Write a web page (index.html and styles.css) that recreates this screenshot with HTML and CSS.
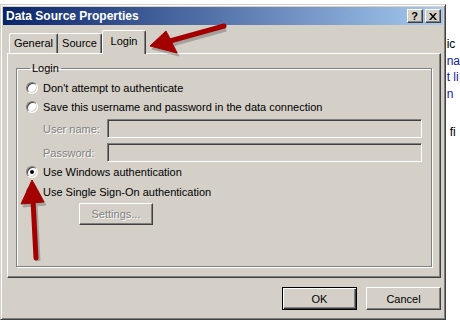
FILE: index.html
```html
<!DOCTYPE html>
<html lang="en">
<head>
    <meta charset="UTF-8">
    <title>Data Source Properties</title>
    <link rel="stylesheet" href="styles.css">
</head>
<body>
    <div class="window">
        <div class="titlebar">
            <span class="title">Data Source Properties</span>
            <div class="caps">
                <button class="cap">?</button>
                <button class="cap">
                    <svg width="8" height="7" viewBox="0 0 8 7"><path d="M0 0h2l2 2.5L6 0h2L5 3.5 8 7H6L4 4.5 2 7H0l3-3.5z" fill="#000"/></svg>
                </button>
            </div>
        </div>

        <div class="dlg">
            <div class="tabs">
                <div class="tab tab-general">General</div>
                <div class="tab tab-source">Source</div>
                <div class="tab tab-login selected">Login</div>
            </div>

            <div class="panel">
                <fieldset class="group">
                    <legend>Login</legend>

                    <div class="row row1"><span class="radio"></span>Don't attempt to authenticate</div>
                    <div class="row row2"><span class="radio"></span>Save this username and password in the data connection</div>

                    <div class="field field1">
                        <label class="disabled">User name:</label>
                        <div class="input"></div>
                    </div>
                    <div class="field field2">
                        <label class="disabled">Password:</label>
                        <div class="input"></div>
                    </div>

                    <div class="row row3"><span class="radio checked"></span>Use Windows authentication</div>
                    <div class="row row4"><span class="radio"></span>Use Single Sign-On authentication</div>

                    <button class="btn settings" disabled>Settings...</button>
                </fieldset>
            </div>

            <div class="actions">
                <button class="btn default">OK</button>
                <button class="btn">Cancel</button>
            </div>
        </div>
    </div>

    <div class="behind">
        <div class="ln dark">ic</div>
        <div class="ln">na</div>
        <div class="ln">t li</div>
        <div class="ln">n</div>
        <div class="ln gap dark">fi</div>
    </div>

    <!-- the red pointer arrows drawn over the screenshot -->
    <svg class="arrows" width="460" height="327" viewBox="0 0 460 327">
        <g fill="#6b6b6b" stroke="#6b6b6b" opacity="0.45" transform="translate(2 3)">
            <line x1="224" y1="26" x2="170" y2="41" stroke-width="5"/>
            <polygon points="150,46 166,31 177,53"/>
            <line x1="33" y1="200" x2="36" y2="258" stroke-width="5"/>
            <polygon points="32,180 21,204 44,202"/>
        </g>
        <g fill="#a50000" stroke="#a50000">
            <line x1="224" y1="26" x2="170" y2="41" stroke-width="5" stroke-linecap="round"/>
            <polygon points="150,46 166,31 177,53"/>
            <line x1="33" y1="200" x2="36" y2="258" stroke-width="5" stroke-linecap="round"/>
            <polygon points="32,180 21,204 44,202"/>
        </g>
    </svg>
</body>
</html>
```

FILE: styles.css
```css
body {
    margin: 0;
    background-color: #fff;
    font-family: "Liberation Sans", Arial, sans-serif;
    font-size: 11px;
    color: #000;
    display: flex;
    align-items: flex-start;
    position: relative;
    height: 327px;
    overflow: hidden;
}

.window {
    margin-top: 4px;
    width: 452px;
    height: 316px;
    box-sizing: border-box;
    background-color: #d4d0c8;
    border: 1px solid;
    border-color: #d4d0c8 #404040 #404040 #d4d0c8;
    box-shadow: inset 1px 1px #fff, inset -1px -1px #808080;
    padding: 2px 2px 2px 2px;
}

.titlebar {
    height: 18px;
    display: flex;
    align-items: center;
    justify-content: space-between;
    background: linear-gradient(to right, #0a246a, #a6caf0);
    padding-left: 3px;
}

.title {
    color: #fff;
    font-weight: bold;
    font-size: 12px;
}

.caps {
    display: flex;
    gap: 2px;
    margin-right: 2px;
}

.cap {
    width: 16px;
    height: 14px;
    padding: 0;
    margin: 0;
    border: 1px solid;
    border-color: #fff #404040 #404040 #fff;
    box-shadow: inset -1px -1px #808080;
    background-color: #d4d0c8;
    font-family: "Liberation Sans", Arial, sans-serif;
    font-weight: bold;
    font-size: 11px;
    line-height: 11px;
    display: flex;
    align-items: center;
    justify-content: center;
}

.dlg {
    padding: 5px 0 0 4px;
}

.tabs {
    display: flex;
    align-items: flex-end;
    height: 23px;
    padding-left: 2px;
    position: relative;
    z-index: 1;
}

.tab {
    height: 20px;
    box-sizing: border-box;
    border: 1px solid;
    border-bottom: none;
    border-color: #fff #404040 #404040 #fff;
    border-radius: 2px 2px 0 0;
    box-shadow: inset -1px 0 #808080;
    padding: 3px 0 0 0;
    text-align: center;
}

.tab-general { width: 49px; }
.tab-source { width: 44px; border-left: none; }
.tab-login { width: 44px; }

.tab.selected {
    height: 24px;
    margin-bottom: -1px;
    background-color: #d4d0c8;
    padding-top: 4px;
}

.panel {
    width: 434px;
    height: 225px;
    box-sizing: border-box;
    border: 1px solid;
    border-color: #fff #404040 #404040 #fff;
    box-shadow: inset -1px -1px #808080;
    padding: 8px 0 0 8px;
}

.group {
    margin: 0;
    width: 416px;
    height: 205px;
    box-sizing: border-box;
    border: 1px solid #808080;
    box-shadow: inset 1px 1px #fff, 1px 1px 0 #fff;
    padding: 5px 0 0 9px;
}

.group legend {
    padding: 0 2px;
    margin-left: 4px;
    line-height: 13px;
}

.row {
    display: flex;
    align-items: center;
    height: 16px;
    white-space: nowrap;
}

.row2 { margin-top: 3px; }
.row3 { margin-top: 2px; }
.row4 { margin-top: 4px; }

.radio {
    width: 12px;
    height: 12px;
    box-sizing: border-box;
    border-radius: 50%;
    background-color: #fff;
    border: 1px solid;
    border-color: #808080 #fff #fff #808080;
    box-shadow: inset 1px 1px #404040, inset -1px -1px #d4d0c8;
    margin-right: 5px;
    display: flex;
    align-items: center;
    justify-content: center;
}

.radio.checked::after {
    content: "";
    width: 4px;
    height: 4px;
    border-radius: 50%;
    background-color: #000;
}

.field {
    display: flex;
    align-items: center;
    padding-left: 17px;
}

.field1 { margin-top: 4px; }
.field2 { margin-top: 5px; }

.field label {
    width: 64px;
}

.disabled {
    color: #808080;
    text-shadow: 1px 1px #fff;
}

.input {
    width: 315px;
    height: 19px;
    box-sizing: border-box;
    background-color: #d4d0c8;
    border: 1px solid;
    border-color: #808080 #fff #fff #808080;
    box-shadow: inset 1px 1px #404040;
}

.btn {
    font-family: "Liberation Sans", Arial, sans-serif;
    font-size: 11px;
    color: #000;
    background-color: #d4d0c8;
    border: 1px solid;
    border-color: #fff #404040 #404040 #fff;
    box-shadow: inset -1px -1px #808080;
    padding: 0;
    margin: 0;
    width: 75px;
    height: 23px;
}

.settings {
    display: block;
    margin: 3px 0 0 53px;
    width: 74px;
    height: 22px;
    color: #808080;
    text-shadow: 1px 1px #fff;
}

.btn.default {
    border: 1px solid #000;
    box-shadow: inset 1px 1px #fff, inset -1px -1px #404040, inset -2px -2px #808080;
}

.actions {
    width: 434px;
    display: flex;
    justify-content: flex-end;
    gap: 9px;
    margin-top: 9px;
}

.behind {
    padding-top: 36px;
    padding-left: 1px;
    font-size: 12px;
    line-height: 16.5px;
    color: #1a1aa0;
    white-space: nowrap;
}

.behind .dark { color: #000; }
.behind .gap { margin-top: 22px; padding-left: 3px; }

.arrows {
    position: absolute;
    top: 0;
    left: 0;
    pointer-events: none;
}
```
